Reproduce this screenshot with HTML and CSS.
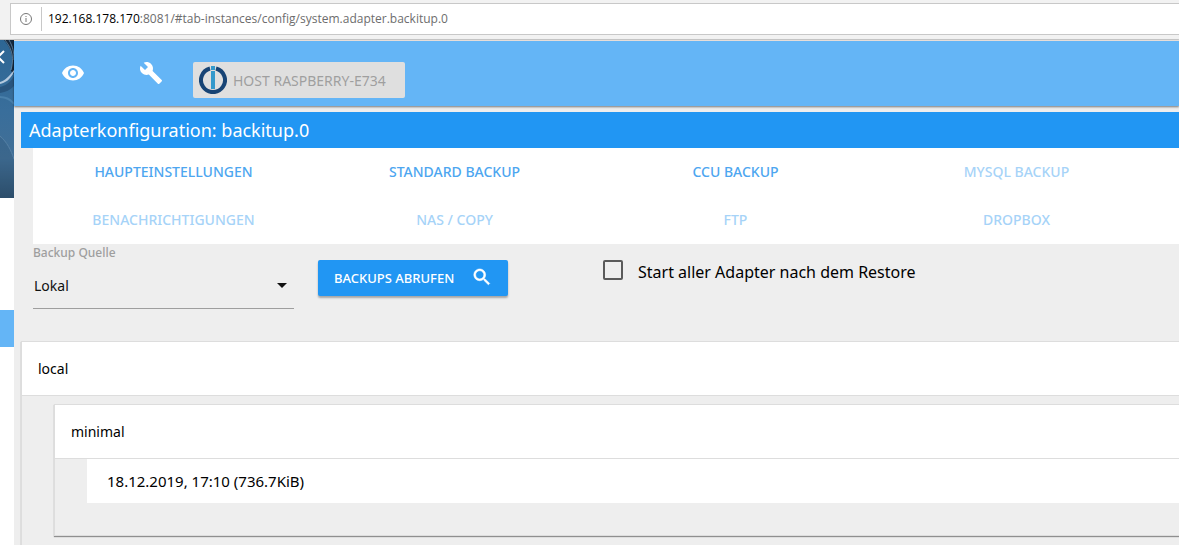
FILE: index.html
```
<!DOCTYPE html>
<html lang="de">
<head>
<meta charset="utf-8">
<meta name="viewport" content="width=device-width, initial-scale=1">
<title>Adapterkonfiguration: backitup.0</title>
<link rel="stylesheet" href="styles.css">
</head>
<body>
<div class="browser-bar">
  <div class="address">
    <button class="address-info" type="button" aria-label="Seiteninformationen">
      <svg width="12" height="12" viewBox="0 0 12 12" fill="none" stroke="#777"><circle cx="6" cy="6" r="5.5"/><path d="M6 5v4M6 3v1"/></svg>
    </button>
    <div class="address-url" role="textbox" aria-label="Adresse" tabindex="0"><span class="address-host">192.168.178.170</span>:8081/#tab-instances/config/system.adapter.backitup.0</div>
  </div>
</div>
<div class="app">
  <aside class="sidebar">
    <div class="sidebar-banner">
      <svg width="14" height="158" viewBox="0 0 14 158" preserveAspectRatio="none">
        <defs>
          <linearGradient id="sea" x1="0" y1="0" x2="0" y2="1">
            <stop offset="0" stop-color="#2d6694"/><stop offset=".45" stop-color="#396e9b"/><stop offset=".75" stop-color="#426f96"/><stop offset="1" stop-color="#2a4862"/>
          </linearGradient>
        </defs>
        <rect width="14" height="158" fill="url(#sea)"/>
        <path d="M4 0h10v34l-3-3c3-12 1-22-7-31z" fill="#15293f"/>
        <path d="M5 0c8 10 9 19 6 30M9 0c4 7 5 12 5 20" fill="none" stroke="#7296b5" stroke-width=".7"/>
        <path d="M14 32C10 40 5 43 0 44v-2c6-2 9-6 14-12z" fill="#b4c9de"/>
        <path d="M14 36C10 43 5 46 0 47v6c6-1 10-3 14-7z" fill="#29557e"/>
        <path d="M0 57c6 0 11 3 14 7" fill="none" stroke="#4a80ab" stroke-width="2"/>
        <path d="M0 97c7 6 11 14 14 23v38H0z" fill="#315a7c" opacity=".35"/>
        <path d="M0 96c7 6 11 14 14 23" fill="none" stroke="#557fa3" stroke-width="1"/>
        <path d="M4 11l-6 6 6 6" fill="none" stroke="#fff" stroke-width="2"/>
      </svg>
    </div>
    <a class="sidebar-item sidebar-item-active" href="#tab-instances" aria-label="Instanzen"></a>
  </aside>
  <div class="content">
    <header class="toolbar">
      <button class="tool" type="button" aria-label="Ansicht">
        <svg width="24" height="24" viewBox="0 0 24 24" fill="currentColor"><path d="M12 4.500C7 4.500 2.730 7.610 1 12c1.730 4.390 6 7.500 11 7.500s9.270-3.110 11-7.500c-1.730-4.390-6-7.500-11-7.500zM12 17c-2.760 0-5-2.240-5-5s2.240-5 5-5 5 2.240 5 5-2.240 5-5 5zm0-8c-1.660 0-3 1.340-3 3s1.340 3 3 3 3-1.340 3-3-1.340-3-3-3z"/></svg>
      </button>
      <button class="tool" type="button" aria-label="Einstellungen">
        <svg width="24" height="24" viewBox="0 0 24 24" fill="currentColor"><path d="M22.700 19l-9.100-9.100c.9-2.300.4-5-1.500-6.900-2-2-5-2.400-7.400-1.300L9 6 6 9 1.600 4.700C.4 7.100.9 10.100 2.900 12.100c1.900 1.900 4.600 2.400 6.900 1.500l9.100 9.100c.4.4 1 .4 1.400 0l2.300-2.300c.5-.4.5-1.100.1-1.400z"/></svg>
      </button>
      <button class="host" type="button">
        <svg width="28" height="28" viewBox="0 0 28 28" fill="none"><path d="M17 2.500a12 12 0 1 1-6 0" stroke="#174475" stroke-width="4"/><path d="M12 0h4v4h-4zM12 5h4v18h-4z" fill="#3399cc"/></svg>
        <span>HOST RASPBERRY-E734</span>
      </button>
    </header>
    <main class="dialog">
      <h1 class="title">Adapterkonfiguration: backitup.0</h1>
      <nav class="tabs">
        <a class="tab" href="#main">HAUPTEINSTELLUNGEN</a>
        <a class="tab" href="#standard">STANDARD BACKUP</a>
        <a class="tab" href="#ccu">CCU BACKUP</a>
        <a class="tab tab-off" href="#mysql">MYSQL BACKUP</a>
        <a class="tab tab-off" href="#notify">BENACHRICHTIGUNGEN</a>
        <a class="tab tab-off" href="#nas">NAS / COPY</a>
        <a class="tab tab-off" href="#ftp">FTP</a>
        <a class="tab tab-off" href="#dropbox">DROPBOX</a>
      </nav>
      <form class="controls">
        <div class="field">
          <label class="field-label" for="source">Backup Quelle</label>
          <div class="select-wrap">
            <select class="select" id="source"><option>Lokal</option></select>
            <svg class="caret" width="10" height="5" viewBox="0 0 10 5"><path d="M0 0h10L5 5z" fill="#111"/></svg>
          </div>
        </div>
        <div class="action">
          <button class="fetch" type="button">
            <span>BACKUPS ABRUFEN</span>
            <svg width="20" height="20" viewBox="1 2 22 22" fill="currentColor" stroke="currentColor" stroke-width=".6"><path d="M15.500 14h-.79l-.28-.27C15.410 12.590 16 11.110 16 9.500 16 5.910 13.090 3 9.500 3S3 5.910 3 9.500 5.910 16 9.500 16c1.610 0 3.090-.59 4.230-1.570l.27.28v.79l5 4.990L20.490 19l-4.990-5zm-6 0C7.010 14 5 11.990 5 9.500S7.010 5 9.500 5 14 7.010 14 9.500 11.990 14 9.500 14z"/></svg>
          </button>
        </div>
        <label class="check" for="restart"><input class="check-box" type="checkbox" id="restart"><span>Start aller Adapter nach dem Restore</span></label>
      </form>
      <section class="group">
        <h2 class="group-head">local</h2>
        <div class="group-body">
          <section class="group">
            <h3 class="group-head">minimal</h3>
            <ul class="backups"><li class="backup">18.12.2019, 17:10 (736.7KiB)</li></ul>
          </section>
        </div>
      </section>
    </main>
  </div>
</div>
</body>
</html>
```
FILE: styles.css
```
* { box-sizing: border-box; }
body {
  margin: 0;
  height: 100vh;
  display: flex;
  flex-direction: column;
  overflow: hidden;
  background: #eee;
  color: #000;
  font-family: "Noto Sans", "Open Sans", sans-serif;
  font-size: 14px;
}
button { border: 0; margin: 0; padding: 0; background: none; font: inherit; }
svg { display: block; flex: none; }
a { text-decoration: none; }
h1, h2, h3, ul { margin: 0; padding: 0; font-weight: 400; list-style: none; }

.browser-bar {
  flex: none;
  padding: 3px 0 4px 10px;
  background: #f2f2f2;
  border-bottom: 1px solid #ccc;
}
.address {
  display: flex;
  align-items: center;
  height: 32px;
  background: #fff;
  border: 1px solid #c8c8c8;
  border-right: 0;
}
.address-info { padding: 0 9px; }
.address-url {
  padding-left: 6px;
  border-left: 1px solid #c8c8c8;
  font-family: "Open Sans", sans-serif;
  font-size: 12px;
  line-height: 24px;
  color: #6d6d6d;
}
.address-host { color: #000; }

.app { flex: 1; display: flex; min-height: 0; }
.sidebar { flex: none; width: 14px; background: #fff; }
.sidebar-banner { margin-bottom: 112px; }
.sidebar-item { display: block; height: 37px; }
.sidebar-item-active { background: #64b5f6; }

.content { flex: 1; min-width: 0; }
.toolbar {
  display: flex;
  height: 66px;
  padding: 20px 0 8px 47px;
  background: #64b5f6;
  border-top: 1px solid #e6ddd8;
  box-shadow: 0 1px 2px rgba(0, 0, 0, .5);
}
.tool { align-self: flex-start; margin-right: 54px; color: #fff; }
.tool + .tool { margin-right: 30px; }
.host {
  display: flex;
  align-items: center;
  align-self: flex-end;
  gap: 6px;
  height: 36px;
  padding: 0 19px 0 6px;
  border-radius: 2px;
  background: #dfdfdf;
  color: #9f9f9f;
}

.dialog { padding: 6px 0 0 7px; }
.title {
  padding-left: 8px;
  background: #2196f3;
  color: #fff;
  font-size: 18px;
  line-height: 36px;
}
.tabs {
  display: grid;
  grid-template-columns: repeat(4, 1fr);
  margin-left: 12px;
  padding-right: 22px;
  background: #fff;
}
.tab {
  font-weight: 500;
  line-height: 48px;
  text-align: center;
  color: #4da6f0;
}
.tab-off { color: #a6d3f8; }

.controls {
  display: grid;
  grid-template-columns: repeat(4, minmax(0, 1fr));
  margin-left: 12px;
  padding-right: 6px;
  height: 97px;
}
.field { padding-right: 24px; }
.field-label {
  display: block;
  font-size: 12px;
  font-weight: 500;
  line-height: 18px;
  color: #9e9e9e;
}
.select-wrap {
  display: flex;
  align-items: center;
  height: 47px;
  border-bottom: 1px solid #9e9e9e;
}
.select {
  flex: 1;
  height: 46px;
  padding: 0 0 0 1px;
  appearance: none;
  border: 0;
  background: none;
  color: #111;
  font: inherit;
}
.caret { margin: 0 7px 0 -17px; pointer-events: none; }
.action { padding-top: 16px; }
.fetch {
  display: flex;
  align-items: center;
  gap: 18px;
  height: 36px;
  padding: 0 16px;
  border-radius: 2px;
  background: #2196f3;
  color: #fff;
  font-size: 13px;
  font-weight: 500;
  box-shadow: 0 2px 2px rgba(0, 0, 0, .3);
}
.check {
  display: flex;
  align-items: flex-start;
  gap: 15px;
  padding-top: 16px;
  font-size: 16px;
  line-height: 24px;
  white-space: nowrap;
}
.check-box {
  flex: none;
  width: 20px;
  height: 20px;
  margin: 0;
  appearance: none;
  border: 2px solid #5a5a5a;
  border-radius: 2px;
}
.check-box:checked { background: #2196f3; }

.group {
  border: 1px solid #ddd;
  border-right: 0;
  background: #eee;
  box-shadow: 0 1px 1px rgba(0, 0, 0, .4);
}
.group-head {
  padding-left: 16px;
  border-bottom: 1px solid #ddd;
  background: #fff;
  font-size: 14px;
  line-height: 53px;
}
.group-body { padding: 8px 0 32px 32px; }
.backups { padding: 0 0 32px 32px; }
.backup { padding-left: 20px; background: #fff; font-size: 15px; line-height: 44px; }
```
